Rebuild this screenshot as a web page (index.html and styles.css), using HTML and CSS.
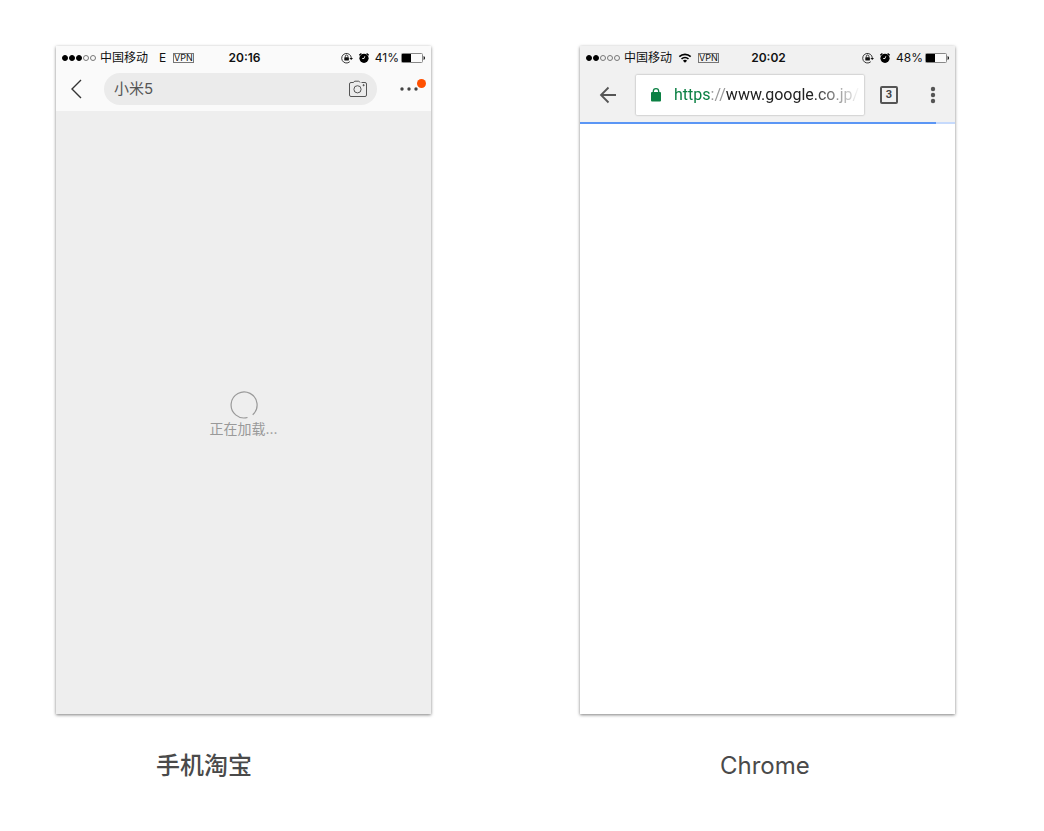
FILE: index.html
```html
<!DOCTYPE html>
<html lang="zh-CN">
<head>
<meta charset="utf-8">
<meta name="viewport" content="width=device-width, initial-scale=1">
<title>手机淘宝 / Chrome</title>
<link rel="stylesheet" href="styles.css">
</head>
<body>
<svg class="defs" aria-hidden="true">
  <symbol id="rotation-lock" viewBox="0 0 12 12">
    <path d="M8.800 9.700A4.800 4.800 0 1 1 10.300 6" fill="none" stroke="#222" stroke-width=".9"/>
    <path d="M8.400 5.900H12l-1.800 2.200z" fill="#111"/>
    <rect x="3.300" y="5.300" width="4.600" height="3.200" rx=".4" fill="#111"/>
    <path d="M4.300 5.400V4.300a1.300 1.300 0 0 1 2.600 0v1.100" fill="none" stroke="#111" stroke-width=".8"/>
  </symbol>
  <symbol id="alarm" viewBox="0 0 12 12">
    <circle cx="6" cy="6.300" r="4.600"/>
    <path d="M1.300 3.200 3.400 1.400M10.700 3.200 8.600 1.400" stroke="#000" stroke-width="1.300"/>
    <path d="M6.800 4.300 6 6.500H4.200" fill="none" stroke="#fff" stroke-width=".9"/>
  </symbol>
  <symbol id="battery" viewBox="0 0 24 10">
    <rect x=".5" y=".5" width="21" height="9" rx="1" fill="#fafafa" stroke="#888"/>
    <rect x="1" y="1" width="9" height="8"/>
    <path d="M22.600 3v4q1.400-.5 1.400-2t-1.400-2z"/>
  </symbol>
</svg>

<main class="board">
  <figure class="sample">
    <section class="phone taobao">
      <div class="status">
        <div class="status-left">
          <span class="signal"><i class="on"></i><i class="on"></i><i class="on"></i><i></i><i></i></span>
          <span class="carrier">中国移动</span>
          <span class="network">E</span>
          <span class="vpn">VPN</span>
        </div>
        <time class="clock">20:16</time>
        <div class="status-right">
          <svg class="mini"><use href="#rotation-lock"/></svg>
          <svg class="mini"><use href="#alarm"/></svg>
          <span class="level">41%</span>
          <svg class="battery"><use href="#battery"/></svg>
        </div>
      </div>
      <header class="search-bar">
        <button class="back" type="button" aria-label="返回">
          <svg width="12" height="20" viewBox="0 0 12 20"><path d="M11 1 2 10l9 9" fill="none" stroke="#333" stroke-width="1.4"/></svg>
        </button>
        <div class="search">
          <input type="text" aria-label="搜索" value="小米5">
          <button type="button" aria-label="拍照搜索">
            <svg width="18" height="18" viewBox="0 0 18 18" fill="none" stroke="#555">
              <path d="M4.500 2.500H2A1.500 1.500 0 0 0 .5 4v11A1.500 1.500 0 0 0 2 16.500h14a1.500 1.500 0 0 0 1.500-1.500V4A1.500 1.500 0 0 0 16 2.500h-3.500M4.500 2.500Q5 1.200 6 1.200h3.500q1 0 1.500 1.300"/>
              <circle cx="8.500" cy="9.300" r="3.600"/><circle cx="14.600" cy="5.200" r=".6" fill="#555"/>
            </svg>
          </button>
        </div>
        <button class="more" type="button" aria-label="更多">
          <svg width="18" height="4" viewBox="0 0 18 4" fill="#444"><circle cx="2" cy="2" r="1.700"/><circle cx="9" cy="2" r="1.700"/><circle cx="16" cy="2" r="1.700"/></svg>
          <span class="badge"></span>
        </button>
      </header>
      <div class="loading" role="status">
        <svg width="28" height="28" viewBox="0 0 28 28"><path d="M17.500 26.500A13 13 0 1 1 22.700 23.700" fill="none" stroke="#999" stroke-width="1.200"/></svg>
        <span>正在加载...</span>
      </div>
    </section>
    <figcaption class="caption">手机淘宝</figcaption>
  </figure>

  <figure class="sample">
    <section class="phone chrome">
      <div class="status">
        <div class="status-left">
          <span class="signal"><i class="on"></i><i class="on"></i><i></i><i></i><i></i></span>
          <span class="carrier">中国移动</span>
          <svg class="wifi" viewBox="0 0 14 10" fill="none" stroke="#000" stroke-width="1.600">
            <path d="M1.300 3.700a8.200 8.200 0 0 1 11.400 0M3.500 6a5 5 0 0 1 7 0"/><path d="M7 9.800 4.900 7.700a3 3 0 0 1 4.200 0z" fill="#000" stroke="none"/>
          </svg>
          <span class="vpn">VPN</span>
        </div>
        <time class="clock">20:02</time>
        <div class="status-right">
          <svg class="mini"><use href="#rotation-lock"/></svg>
          <svg class="mini"><use href="#alarm"/></svg>
          <span class="level">48%</span>
          <svg class="battery"><use href="#battery"/></svg>
        </div>
      </div>
      <header class="toolbar">
        <button class="nav-back" type="button" aria-label="返回">
          <svg width="18" height="18" viewBox="0 0 18 18"><path d="M9.500 1.500 2 9l7.500 7.500M2 9h15" fill="none" stroke="#555" stroke-width="1.800"/></svg>
        </button>
        <div class="omnibox">
          <svg class="lock" width="10" height="14" viewBox="0 0 10 14"><rect y="4" width="10" height="9.500" rx="1" fill="#0b8043"/><path d="M2.300 5V3.400a2.700 2.700 0 0 1 5.400 0V5" fill="none" stroke="#0b8043" stroke-width="1.300"/></svg>
          <div class="url" role="textbox" aria-label="网址" contenteditable="true" spellcheck="false"><span class="scheme">https</span><span class="sep">://</span>www.google.co.jp/</div>
        </div>
        <button class="tabs" type="button" aria-label="标签页">3</button>
        <button class="menu" type="button" aria-label="菜单">
          <svg width="6" height="18" viewBox="0 0 6 18" fill="#555"><circle cx="3" cy="3" r="2.200"/><circle cx="3" cy="9" r="2.200"/><circle cx="3" cy="15" r="2.200"/></svg>
        </button>
      </header>
      <progress class="progress" max="100" value="95" aria-label="加载进度"></progress>
    </section>
    <figcaption class="caption caption-wide">Chrome</figcaption>
  </figure>
</main>
</body>
</html>
```
FILE: styles.css
```css
* { box-sizing: border-box; }

body {
  margin: 0;
  background: #fff;
  color: #111;
  font-family: Inter, "Noto Sans CJK SC", sans-serif;
}

button {
  display: flex;
  align-items: center;
  justify-content: center;
  padding: 0;
  border: 0;
  background: none;
}

svg { display: block; flex: none; }
.defs { position: absolute; width: 0; height: 0; }

.board {
  display: grid;
  grid-template-columns: 1fr 1fr;
  gap: 149px;
  padding: 46px 89px 32px 56px;
}

.sample { margin: 0; min-width: 0; }

.phone {
  display: flex;
  flex-direction: column;
  aspect-ratio: 375 / 668;
  box-shadow: 0 1px 3px rgba(0, 0, 0, .5);
}
.taobao { background: #eee; }
.chrome { background: #fff; }

/* Status bar */
.status {
  display: grid;
  grid-template-columns: 1fr auto 1fr;
  align-items: center;
  height: 23px;
  padding: 0 6px;
  font-size: 12px;
  line-height: 16px;
}
.taobao .status, .search-bar { background: #fafafa; }
.chrome .status, .toolbar { background: #f1f1f1; }

.status-left, .status-right { display: flex; align-items: center; white-space: nowrap; }
.status-right { justify-content: flex-end; }

.signal { display: flex; gap: 1px; margin-right: 4px; }
.signal i {
  width: 6px;
  height: 6px;
  border: 1px solid #777;
  border-radius: 50%;
}
.signal .on { border-color: #000; background: #000; }

.network { width: 8px; margin-left: 11px; }
.wifi { width: 14px; height: 10px; margin-left: 6px; }
.vpn {
  margin-left: 6px;
  border: 1px solid #777;
  font-size: 9px;
  line-height: 8px;
}
.clock { padding-left: 2px; font-size: 12px; font-weight: 600; }
.mini { width: 12px; height: 12px; margin-right: 5px; }
.level { margin-right: 2px; }
.battery { width: 24px; height: 10px; }

/* Taobao search header */
.search-bar { display: flex; align-items: center; height: 42px; padding-bottom: 2px; }
.back { width: 48px; height: 40px; padding-right: 8px; }
.search {
  display: flex;
  flex: 1;
  align-items: center;
  min-width: 0;
  height: 32px;
  padding: 0 10px;
  border-radius: 16px;
  background: #ebebeb;
}
.search input {
  flex: 1;
  min-width: 0;
  padding: 0;
  border: 0;
  background: none;
  color: #555;
  font: 15px/20px Inter, "Noto Sans CJK SC", sans-serif;
}
.more { position: relative; width: 54px; height: 40px; padding-left: 10px; }
.badge {
  position: absolute;
  top: 10px;
  right: 5px;
  width: 9px;
  height: 9px;
  border-radius: 50%;
  background: #ff5000;
}

.loading {
  display: flex;
  flex: 1;
  flex-direction: column;
  align-items: center;
  justify-content: center;
  padding-top: 4px;
  color: #999;
  font-size: 14px;
  line-height: 20px;
}

/* Chrome toolbar */
.toolbar { display: flex; align-items: center; height: 53px; padding-bottom: 1px; }
.nav-back { width: 56px; height: 40px; }
.omnibox {
  display: flex;
  flex: 1;
  align-items: center;
  gap: 13px;
  min-width: 0;
  height: 40px;
  padding: 0 4px 0 15px;
  border-radius: 1px;
  background: #fff;
  box-shadow: 0 0 2px rgba(0, 0, 0, .4);
}
.url {
  flex: 1;
  min-width: 0;
  color: #222;
  font: 16px/24px Roboto, sans-serif;
  white-space: nowrap;
  mask-image: linear-gradient(to right, #000 75%, transparent);
}
.scheme { color: #0b8043; }
.sep { color: #999; }
.tabs {
  width: 18px;
  height: 18px;
  margin: 0 26px 0 16px;
  border: 2px solid #555;
  border-radius: 2px;
  color: #444;
  font: bold 11px/14px Roboto, sans-serif;
}
.menu { width: 18px; height: 40px; margin-right: 13px; }

.progress {
  appearance: none;
  display: block;
  width: 100%;
  height: 2px;
  border: 0;
  background: #c6dafc;
}
.progress::-webkit-progress-bar { background: #c6dafc; }
.progress::-webkit-progress-value { background: #5b96f5; }

.caption {
  padding: 34px 0 0 100px;
  color: #4a4a4a;
  font-size: 24px;
  font-weight: 500;
  line-height: 36px;
}
.caption-wide { padding-left: 140px; font-weight: 400; }
```
